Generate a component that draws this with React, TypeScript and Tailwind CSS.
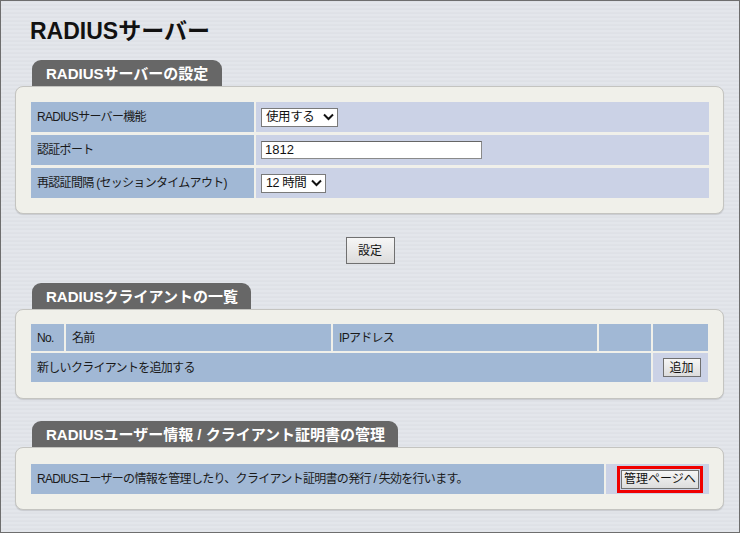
import type { ReactNode } from 'react';

const FONT = "font-['Liberation_Sans','Noto_Sans_CJK_JP',sans-serif]";

function Tab({ width, children }: { width: string; children: ReactNode }) {
  return (
    <div
      className={`ml-[31px] h-[26px] ${width} rounded-t-[9px] bg-[#676767] pl-[14px] text-[15px] font-bold leading-[28px] text-white`}
    >
      {children}
    </div>
  );
}

function Panel({ children, pad }: { children: ReactNode; pad: string }) {
  return (
    <div
      className={`ml-[14px] mr-[15px] rounded-[8px] border border-[#c4c4c0] bg-[#f0f0ea] pl-[15px] pr-[14px] shadow-[0_1px_1px_rgba(0,0,0,0.12)] ${pad}`}
    >
      {children}
    </div>
  );
}

function Chevron() {
  return (
    <svg width="11" height="8" viewBox="0 0 11 8" className="pointer-events-none absolute right-[4px] top-1/2 -translate-y-1/2">
      <path d="M1 1.5 L5.5 6 L10 1.5" fill="none" stroke="#111" strokeWidth="2" />
    </svg>
  );
}

function FakeSelect({ value, width }: { value: string; width: string }) {
  return (
    <div className={`relative h-[19px] ${width}`}>
      <select
        defaultValue={value}
        className="h-full w-full appearance-none rounded-none border border-[#7a7a7a] bg-white pl-[4px] text-[12.5px] leading-[17px] tracking-[-0.4px] text-[#111] outline-none"
      >
        <option>{value}</option>
      </select>
      <Chevron />
    </div>
  );
}

function Btn({ children, cls }: { children: ReactNode; cls: string }) {
  return (
    <button
      type="button"
      className={`border border-[#707070] bg-[linear-gradient(#f6f6f6,#dcdcdc)] text-[12px] text-[#111] ${cls}`}
    >
      {children}
    </button>
  );
}

export default function App() {
  const label = 'bg-[#a1b8d5] pl-[6px] flex items-center tracking-[-0.7px]';
  const value = 'bg-[#cbd2e6] pl-[5px] flex items-center';

  return (
    <div
      className={`${FONT} h-[533px] w-[740px] overflow-hidden border border-[#6e6e6e] bg-[#e0e3e8] bg-[repeating-linear-gradient(0deg,#e3e6eb_0px,#e3e6eb_2px,#d9dce2_3px,#e6e8ec_4px)] text-[#1a1a1a]`}
    >
      <h1 className="pl-[29px] pt-[17px] text-[23px] font-bold leading-[26px] text-[#111]">RADIUSサーバー</h1>

      {/* サーバー設定 */}
      <div className="mt-[16px]">
        <Tab width="w-[190px]">RADIUSサーバーの設定</Tab>
        <Panel pad="pt-[15px] pb-[15px]">
          <div className="grid grid-cols-[223px_1fr] gap-x-[2px] gap-y-[3px] text-[12px]">
            <div className={`${label} h-[30px]`}>RADIUSサーバー機能</div>
            <div className={value}>
              <FakeSelect value="使用する" width="w-[77px]" />
            </div>
            <div className={`${label} h-[30px]`}>認証ポート</div>
            <div className={value}>
              <input
                defaultValue="1812"
                className="h-[18px] w-[221px] border border-[#8a8a8a] border-t-[#666] bg-white px-[3px] text-[13px] text-[#111] outline-none"
              />
            </div>
            <div className={`${label} h-[30px]`}>再認証間隔 (セッションタイムアウト)</div>
            <div className={value}>
              <FakeSelect value="12 時間" width="w-[65px]" />
            </div>
          </div>
        </Panel>
      </div>

      <div className="mt-[23px] flex justify-center">
        <Btn cls="h-[27px] w-[49px]">設定</Btn>
      </div>

      {/* クライアント一覧 */}
      <div className="mt-[19px]">
        <Tab width="w-[219px]">RADIUSクライアントの一覧</Tab>
        <Panel pad="pt-[14px] pb-[16px]">
          <div className="grid grid-cols-[33px_265px_264px_52px_55px] grid-rows-[27px_29px] gap-[2px] text-[12px]">
            <div className={label}>No.</div>
            <div className={label}>名前</div>
            <div className={label}>IPアドレス</div>
            <div className={label} />
            <div className={label} />
            <div className={`${label} col-span-4`}>新しいクライアントを追加する</div>
            <div className="flex items-center justify-center bg-[#cbd2e6] pl-[2px]">
              <Btn cls="h-[19px] w-[38px] leading-[16px]">追加</Btn>
            </div>
          </div>
        </Panel>
      </div>

      {/* ユーザー情報 */}
      <div className="mt-[22px]">
        <Tab width="w-[366px]">RADIUSユーザー情報 / クライアント証明書の管理</Tab>
        <Panel pad="pt-[16px] pb-[15px]">
          <div className="grid h-[30px] grid-cols-[573px_1fr] gap-x-[2px] text-[12px]">
            <div className={label}>RADIUSユーザーの情報を管理したり、クライアント証明書の発行 / 失効を行います。</div>
            <div className="flex items-center bg-[#cbd2e6] pl-[11px]">
              <div className="border-[3px] border-[#f00000] p-px">
                <Btn cls="block h-[19px] w-[78px] leading-[16px]">管理ページへ</Btn>
              </div>
            </div>
          </div>
        </Panel>
      </div>
    </div>
  );
}
